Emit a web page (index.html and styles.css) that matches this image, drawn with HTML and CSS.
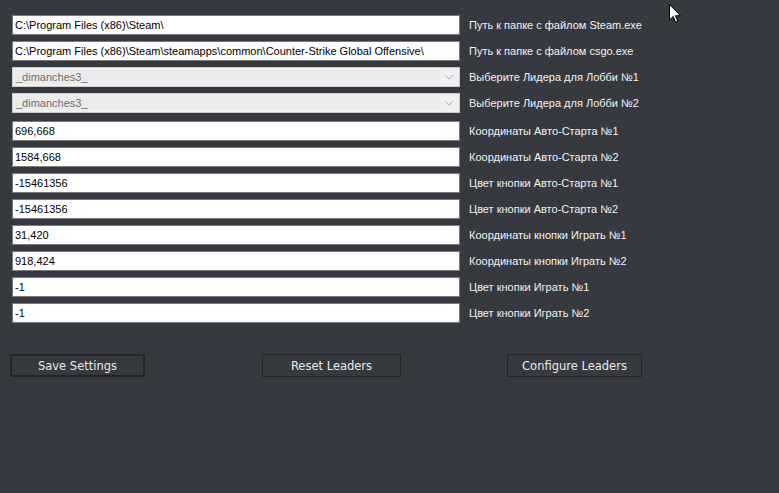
FILE: index.html
```html
<!DOCTYPE html>
<html>
<head>
    <title>Settings</title>
    <meta charset="UTF-8">
    <link rel="stylesheet" href="styles.css">
</head>
<body>
    <div class="form">
        <div class="row">
            <input class="field" type="text" value="C:\Program Files (x86)\Steam\">
            <span class="label">Путь к папке с файлом Steam.exe</span>
        </div>
        <div class="row">
            <input class="field" type="text" value="C:\Program Files (x86)\Steam\steamapps\common\Counter-Strike Global Offensive\">
            <span class="label">Путь к папке с файлом csgo.exe</span>
        </div>
        <div class="row">
            <div class="combo">
                <span class="combo-text">_dimanches3_</span>
                <span class="combo-arrow"><svg width="10" height="6" viewBox="0 0 10 6"><path d="M1 1 L5 5 L9 1" fill="none" stroke="#a8a8a8" stroke-width="1"/></svg></span>
            </div>
            <span class="label">Выберите Лидера для Лобби №1</span>
        </div>
        <div class="row row-last-combo">
            <div class="combo">
                <span class="combo-text">_dimanches3_</span>
                <span class="combo-arrow"><svg width="10" height="6" viewBox="0 0 10 6"><path d="M1 1 L5 5 L9 1" fill="none" stroke="#a8a8a8" stroke-width="1"/></svg></span>
            </div>
            <span class="label">Выберите Лидера для Лобби №2</span>
        </div>
        <div class="row">
            <input class="field" type="text" value="696,668">
            <span class="label">Координаты Авто-Старта №1</span>
        </div>
        <div class="row">
            <input class="field" type="text" value="1584,668">
            <span class="label">Координаты Авто-Старта №2</span>
        </div>
        <div class="row">
            <input class="field" type="text" value="-15461356">
            <span class="label">Цвет кнопки Авто-Старта №1</span>
        </div>
        <div class="row">
            <input class="field" type="text" value="-15461356">
            <span class="label">Цвет кнопки Авто-Старта №2</span>
        </div>
        <div class="row">
            <input class="field" type="text" value="31,420">
            <span class="label">Координаты кнопки Играть №1</span>
        </div>
        <div class="row">
            <input class="field" type="text" value="918,424">
            <span class="label">Координаты кнопки Играть №2</span>
        </div>
        <div class="row">
            <input class="field" type="text" value="-1">
            <span class="label">Цвет кнопки Играть №1</span>
        </div>
        <div class="row">
            <input class="field" type="text" value="-1">
            <span class="label">Цвет кнопки Играть №2</span>
        </div>

        <div class="buttons">
            <button class="btn btn-save">Save Settings</button>
            <button class="btn btn-reset">Reset Leaders</button>
            <button class="btn btn-config">Configure Leaders</button>
        </div>
    </div>

    <svg class="cursor" width="13" height="20" viewBox="0 0 13 20">
        <path d="M0.5 0.5 L0.5 16 L4.2 12.4 L6.6 18.2 L8.8 17.3 L6.5 11.7 L11.5 11.7 Z" fill="#ffffff" stroke="#000000" stroke-width="1"/>
    </svg>
</body>
</html>
```

FILE: styles.css
```css
body {
    margin: 0;
    background: #36393f;
    font-family: "Liberation Sans", Arial, sans-serif;
    width: 779px;
    height: 493px;
    overflow: hidden;
    position: relative;
}
.form {
    padding: 15px 0 0 12px;
}
.row {
    display: flex;
    align-items: center;
    height: 20px;
    margin-bottom: 6px;
}
.row-last-combo {
    margin-bottom: 8px;
}
.field {
    box-sizing: border-box;
    width: 448px;
    height: 20px;
    margin: 0;
    padding: 0 2px;
    border: 1px solid #7a7a7a;
    background: #ffffff;
    color: #000000;
    font-family: "Liberation Sans", Arial, sans-serif;
    font-size: 11px;
    outline: none;
}
.combo {
    box-sizing: border-box;
    width: 448px;
    height: 20px;
    display: flex;
    border: 1px solid #cccccc;
    background: #f0f0f0;
    padding: 2px;
}
.combo-text {
    flex: 1;
    background: #ebebeb;
    color: #6d6d6d;
    font-size: 11px;
    line-height: 14px;
    padding-left: 1px;
}
.combo-arrow {
    width: 17px;
    display: flex;
    align-items: center;
    justify-content: center;
}
.label {
    margin-left: 9px;
    color: #f2f2f2;
    font-size: 11px;
}
.buttons {
    display: flex;
    margin: 31px 0 0 -2px;
}
.btn {
    box-sizing: border-box;
    height: 23px;
    background: #36393f;
    color: #eaeaea;
    font-family: "DejaVu Sans", Verdana, sans-serif;
    font-size: 11.5px;
    border: 1px solid #222428;
    padding: 0;
}
.btn-save {
    width: 135px;
    border: 2px solid #222428;
}
.btn-reset {
    width: 139px;
    margin-left: 117px;
}
.btn-config {
    width: 135px;
    margin-left: 106px;
}
.cursor {
    position: absolute;
    left: 669px;
    top: 4px;
}
```
